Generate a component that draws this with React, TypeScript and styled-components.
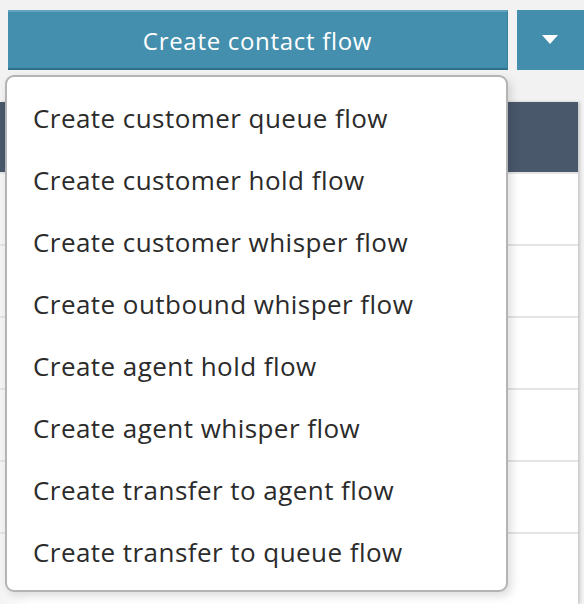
import React from "react";
import styled, { createGlobalStyle } from "styled-components";

const GlobalStyle = createGlobalStyle`
    html, body {
        margin: 0;
        padding: 0;
        background: #f2f2f2;
        overflow: hidden;
    }
    body {
        font-family: "Open Sans", "Liberation Sans", sans-serif;
    }
`;

const Page = styled.div`
    position: relative;
    width: 584px;
    height: 604px;
    overflow: hidden;
`;

const Toolbar = styled.div`
    display: flex;
    gap: 9px;
    padding: 10px 0 0 8px;
`;

const MainButton = styled.button`
    flex: 0 0 500px;
    height: 60px;
    box-sizing: border-box;
    border: none;
    border-top: 2px solid #62a4bd;
    border-bottom: 2px solid #2f7089;
    border-right: 1px solid #3a7e99;
    background: #448fad;
    color: #ffffff;
    font-family: inherit;
    font-size: 24px;
    letter-spacing: 0.7px;
    padding: 0;
    cursor: pointer;
`;

const ToggleButton = styled.button`
    flex: 0 0 80px;
    height: 60px;
    border: none;
    background: #448ead;
    display: flex;
    align-items: center;
    padding: 0 0 0 24px;
    cursor: pointer;
`;

const Table = styled.div`
    margin-top: 32px;
    width: 578px;
    background: #ffffff;
    box-shadow: 2px 0 3px rgba(0, 0, 0, 0.18);
`;

const HeaderBar = styled.div`
    height: 70px;
    background: #4a586c;
`;

const Row = styled.div`
    height: 70px;
    border-top: 2px solid #e4e4e4;
    background: linear-gradient(90deg, #f4f4f4 0, #ffffff 30px);
`;

const Menu = styled.ul`
    position: absolute;
    top: 75px;
    left: 5px;
    width: 503px;
    box-sizing: border-box;
    margin: 0;
    padding: 10px 0 7px;
    list-style: none;
    background: #ffffff;
    border: 2px solid #b4b4b4;
    border-radius: 9px;
    box-shadow: 3px 4px 10px rgba(0, 0, 0, 0.14);
`;

const MenuItem = styled.li`
    height: 62px;
    display: flex;
    align-items: center;
    padding-left: 26px;
    font-size: 26px;
    letter-spacing: 0.45px;
    color: #2b2b2b;
    white-space: nowrap;
`;

const items = [
    "Create customer queue flow",
    "Create customer hold flow",
    "Create customer whisper flow",
    "Create outbound whisper flow",
    "Create agent hold flow",
    "Create agent whisper flow",
    "Create transfer to agent flow",
    "Create transfer to queue flow",
];

export default function App() {
    return (
        <Page>
            <GlobalStyle />
            <Toolbar>
                <MainButton>Create contact flow</MainButton>
                <ToggleButton aria-label="More options">
                    <svg width="18" height="10" viewBox="0 0 18 10">
                        <path d="M1 0 L17 0 L9 9 Z" fill="#ffffff" />
                    </svg>
                </ToggleButton>
            </Toolbar>
            <Table>
                <HeaderBar />
                {[0, 1, 2, 3, 4, 5].map((i) => (
                    <Row key={i} />
                ))}
            </Table>
            <Menu>
                {items.map((label) => (
                    <MenuItem key={label}>{label}</MenuItem>
                ))}
            </Menu>
        </Page>
    );
}
